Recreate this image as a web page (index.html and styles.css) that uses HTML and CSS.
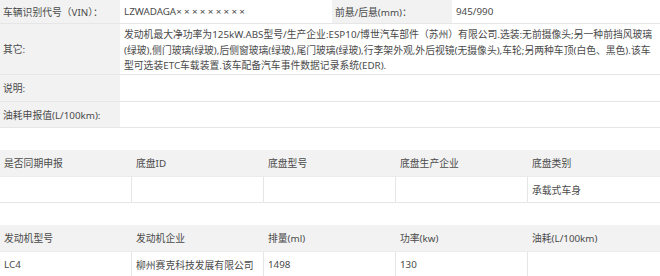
FILE: index.html
```html
<!DOCTYPE html>
<html lang="zh">
<head>
<meta charset="utf-8">
<link rel="stylesheet" href="styles.css">
</head>
<body>
<div class="info">
  <div class="lab r1">车辆识别代号（VIN）：</div>
  <div class="val r1">LZWADAGA<span class="mask">×××××××××</span></div>
  <div class="lab r1">前悬/后悬(mm)：</div>
  <div class="val r1">945/990</div>

  <div class="lab r2">其它:</div>
  <div class="val r2 wide">发动机最大净功率为125kW.ABS型号/生产企业:ESP10/博世汽车部件（苏州）有限公司.选装:无前摄像头;另一种前挡风玻璃<br>(绿玻),侧门玻璃(绿玻),后侧窗玻璃(绿玻),尾门玻璃(绿玻),行李架外观,外后视镜(无摄像头),车轮;另两种车顶(白色、黑色).该车<br>型可选装ETC车载装置.该车配备汽车事件数据记录系统(EDR).</div>

  <div class="lab r3">说明:</div>
  <div class="val r3 wide"></div>

  <div class="lab r4">油耗申报值(L/100km):</div>
  <div class="val r4 wide"></div>
</div>

<div class="grid5">
  <div class="hd">是否同期申报</div>
  <div class="hd">底盘ID</div>
  <div class="hd">底盘型号</div>
  <div class="hd">底盘生产企业</div>
  <div class="hd">底盘类别</div>
  <div class="cell"></div>
  <div class="cell"></div>
  <div class="cell"></div>
  <div class="cell"></div>
  <div class="cell last">承载式车身</div>
</div>

<div class="grid5">
  <div class="hd">发动机型号</div>
  <div class="hd">发动机企业</div>
  <div class="hd">排量(ml)</div>
  <div class="hd">功率(kw)</div>
  <div class="hd">油耗(L/100km)</div>
  <div class="cell">LC4</div>
  <div class="cell">柳州赛克科技发展有限公司</div>
  <div class="cell">1498</div>
  <div class="cell">130</div>
  <div class="cell last"></div>
</div>
</body>
</html>
```
FILE: styles.css
```css
html, body {
  margin: 0;
  padding: 0;
  background: #ffffff;
}
body {
  font-family: "Noto Sans", "Noto Sans CJK SC", sans-serif;
  font-size: 9.8px;
  color: #4a4a4a;
  width: 660px;
  overflow: hidden;
}
.info {
  display: grid;
  grid-template-columns: 120px 212px 120px 1fr;
  grid-template-rows: 24px 51px 27px 26px;
}
.lab, .val {
  display: flex;
  align-items: center;
  padding: 0 4px;
  border-bottom: 1px solid #e6e6e6;
  white-space: nowrap;
}
.lab {
  background: #f2f2f2;
  padding-left: 3px;
}
.mask {
  letter-spacing: 2.3px;
}
.val.wide {
  grid-column: 2 / 5;
}
.r2.val {
  line-height: 15.5px;
  white-space: nowrap;
  display: block;
  padding-top: 3px;
  padding-right: 0;
}
.grid5 {
  display: grid;
  grid-template-columns: repeat(5, 1fr);
  grid-template-rows: 27px 26px;
  margin-top: 22px;
}
.hd {
  background: #f2f2f2;
  display: flex;
  align-items: center;
  padding: 0 4px;
  border-bottom: 1px solid #ececec;
  white-space: nowrap;
}
.cell {
  display: flex;
  align-items: center;
  padding: 0 4px;
  border-right: 1px solid #e6e6e6;
  border-bottom: 1px solid #e6e6e6;
  white-space: nowrap;
}
.cell.last {
  border-right: none;
}
```
